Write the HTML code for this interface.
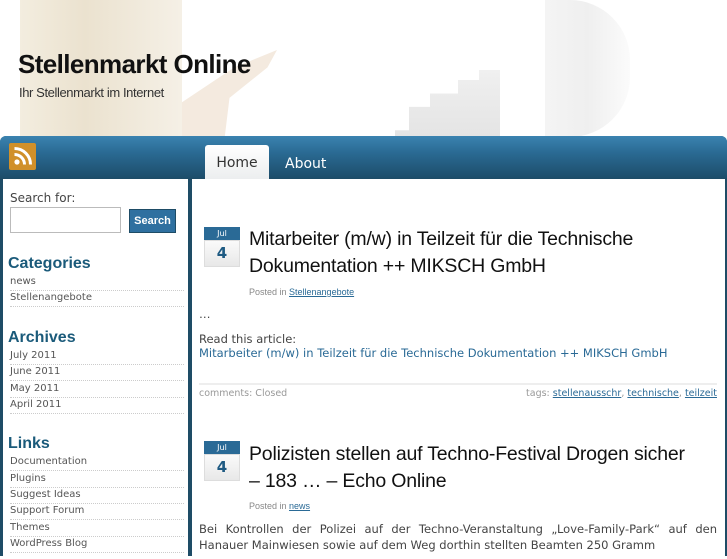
<!DOCTYPE html>
<html><head><meta charset="utf-8"><style>
*{margin:0;padding:0;box-sizing:border-box}
body{width:727px;height:545px;overflow:hidden;background:#fff;font-family:"DejaVu Sans",sans-serif;position:relative}
.hdr{position:absolute;left:0;top:0;width:727px;height:137px;background:#fff}
.coinL{position:absolute;left:20px;top:0;width:162px;height:137px;background:linear-gradient(90deg,#f3eddf,#ebe2cf 40%,#f5f0e6);}
.coinR{position:absolute;left:545px;top:0;width:85px;height:137px;background:linear-gradient(90deg,#f4f4f4,#efefef,#fbfbfb);border-radius:0 60px 60px 0}
.hand{position:absolute;left:182px;top:50px;width:95px;height:87px;background:#f4eadf;clip-path:polygon(0 60%,55% 20%,100% 0,90% 20%,50% 55%,45% 100%,0 100%)}
.stacks{position:absolute;left:395px;top:70px;width:140px;height:67px;background:linear-gradient(#f0f0f0,#e4e4e4);clip-path:polygon(0 100%,0 90%,10% 90%,10% 55%,25% 55%,25% 35%,45% 35%,45% 15%,60% 15%,60% 0,75% 0,75% 100%)}
.title{position:absolute;left:18px;top:49px;font:bold 26px "Liberation Sans",sans-serif;color:#111;letter-spacing:-0.6px}
.sub{position:absolute;left:19px;top:85px;font:13px "Liberation Sans",sans-serif;color:#333;letter-spacing:-0.4px}
.frame{position:absolute;left:0;top:136px;width:727px;height:420px;background:#1e4c66;border-radius:6px 6px 0 0}
.nav{position:absolute;left:0;top:136px;width:727px;height:42px;background:linear-gradient(#3b83b0,#2a6a93 40%,#1d4d6a);border-radius:6px 6px 0 0}
.rss{position:absolute;left:9px;top:143px;width:27px;height:27px;background:#d0902a;border-radius:2px}
.tab{position:absolute;left:205px;top:145px;width:64px;height:34px;background:linear-gradient(#fff,#eceeef);border-radius:3px 3px 0 0;font-size:14px;color:#333;text-align:center;padding-top:10px}
.about{position:absolute;left:285px;top:156px;font-size:14px;color:#fff}
.side{position:absolute;left:3px;top:179px;width:185px;height:380px;background:#fff}
.main{position:absolute;left:192px;top:179px;width:533px;height:380px;background:#fff}
.lbl{position:absolute;left:10px;top:191px;font-size:12px;color:#444}
.inp{position:absolute;left:10px;top:207px;width:111px;height:26px;border:1px solid #bbb}
.btn{position:absolute;left:129px;top:209px;width:47px;height:24px;background:#2f70a0;border:1px solid #1e4c66;color:#fff;font:bold 11px "Liberation Sans",sans-serif;text-align:center;line-height:22px}
h3{position:absolute;left:8px;font:bold 16px "Liberation Sans",sans-serif;color:#1a5a7a}
.li{position:absolute;left:10px;width:174px;font-size:10px;color:#555;border-bottom:1px dotted #ccc;height:16.5px;line-height:15px}
.cal{position:absolute;left:204px;width:36px;height:42px}
.cal .m{height:13px;background:#2a6a96;color:#fff;font-size:8px;text-align:center;line-height:13px}
.cal .d{height:27px;background:linear-gradient(#fafafa,#e8e8e8);border:1px solid #ddd;color:#1e5a82;font:bold 15px "DejaVu Sans",sans-serif;text-align:center;line-height:25px}
.pt{position:absolute;left:249px;font:19.5px "Liberation Sans",sans-serif;color:#111;line-height:27px;letter-spacing:-0.2px}
.pi{position:absolute;left:249px;font:9px "Liberation Sans",sans-serif;color:#888}
.pi a{color:#2a6a96}
.txt{position:absolute;left:199px;font-size:11.5px;color:#444}
.lnk{color:#2a6a96}
.sep{position:absolute;left:199px;width:518px;border-top:2px solid #eee}
.small{position:absolute;font:9.5px "DejaVu Sans",sans-serif;color:#999}
</style></head><body>
<div class="hdr"><div class="coinL"></div><div class="coinR"></div><div class="hand"></div><div class="stacks"></div></div>
<div class="title">Stellenmarkt Online</div>
<div class="sub">Ihr Stellenmarkt im Internet</div>
<div class="frame"></div>
<div class="nav"></div>
<div class="rss"><svg width="27" height="27" viewBox="0 0 27 27"><circle cx="8" cy="19" r="2.6" fill="#fff"/><path d="M5.5 11.5a10 10 0 0 1 10 10" stroke="#fff" stroke-width="3" fill="none"/><path d="M5.5 5.5a16 16 0 0 1 16 16" stroke="#fff" stroke-width="3" fill="none"/></svg></div>
<div class="tab">Home</div>
<div class="about">About</div>
<div class="side"></div>
<div class="main"></div>
<div class="lbl">Search for:</div>
<div class="inp"></div>
<div class="btn">Search</div>
<h3 style="top:255px">Categories</h3>
<div class="li" style="top:274px">news</div>
<div class="li" style="top:290px">Stellenangebote</div>
<h3 style="top:329px">Archives</h3>
<div class="li" style="top:348px">July 2011</div>
<div class="li" style="top:364px">June 2011</div>
<div class="li" style="top:381px">May 2011</div>
<div class="li" style="top:397px">April 2011</div>
<h3 style="top:435px">Links</h3>
<div class="li" style="top:454px">Documentation</div>
<div class="li" style="top:471px">Plugins</div>
<div class="li" style="top:487px">Suggest Ideas</div>
<div class="li" style="top:503px">Support Forum</div>
<div class="li" style="top:520px">Themes</div>
<div class="li" style="top:536px">WordPress Blog</div>

<div class="cal" style="top:227px"><div class="m">Jul</div><div class="d">4</div></div>
<div class="pt" style="top:226px">Mitarbeiter (m/w) in Teilzeit für die Technische<br>Dokumentation ++ MIKSCH GmbH</div>
<div class="pi" style="top:287px">Posted in <a href="#">Stellenangebote</a></div>
<div class="txt" style="top:307px">…</div>
<div class="txt" style="top:332px">Read this article:<br><span class="lnk">Mitarbeiter (m/w) in Teilzeit für die Technische Dokumentation ++ MIKSCH GmbH</span></div>
<div class="sep" style="top:383px"></div>
<div class="small" style="left:199px;top:388px">comments: Closed</div>
<div class="small" style="right:10px;top:388px">tags: <u class="lnk">stellenausschr</u>, <u class="lnk">technische</u>, <u class="lnk">teilzeit</u></div>

<div class="cal" style="top:441px"><div class="m">Jul</div><div class="d">4</div></div>
<div class="pt" style="top:441px">Polizisten stellen auf Techno-Festival Drogen sicher<br>– 183 … – Echo Online</div>
<div class="pi" style="top:501px">Posted in <a href="#">news</a></div>
<div class="txt" style="top:522px;width:518px;text-align:justify;text-align-last:justify">Bei Kontrollen der Polizei auf der Techno-Veranstaltung „Love-Family-Park“ auf den</div>
<div class="txt" style="top:538px">Hanauer Mainwiesen sowie auf dem Weg dorthin stellten Beamten 250 Gramm</div>
</body></html>
